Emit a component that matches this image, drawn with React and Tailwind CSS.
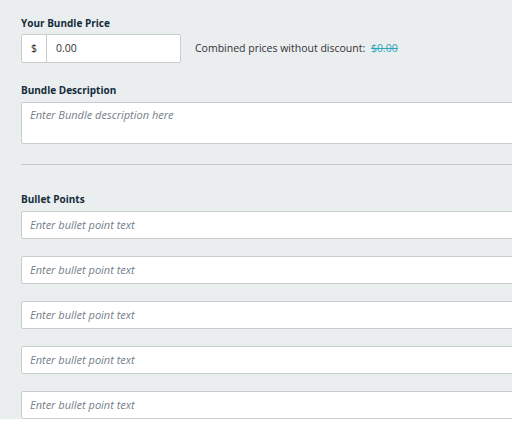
const bullets = [1, 2, 3, 4, 5]

export default function App() {
  return (
    <div className="w-[512px] h-[441px] overflow-hidden bg-white font-['Open_Sans',sans-serif]">
      <div className="h-[419px] overflow-hidden bg-[#eaeeef] pl-[21px] pt-[16px]">
        <div className="w-[580px]">
          {/* Price */}
          <Label>Your Bundle Price</Label>
          <div className="mt-[4px] flex items-center">
            <div className="flex h-[29px] border border-[#c9cdce] rounded-[2px] bg-white">
              <span className="w-[25px] flex items-center justify-center text-[10.5px] text-[#222] border-r border-[#c9cdce]">
                $
              </span>
              <span className="w-[133px] flex items-center pl-[9px] text-[10.5px] text-[#333]">0.00</span>
            </div>
            <p className="ml-[14px] text-[10.5px] text-[#333]">
              Combined prices without discount:{' '}
              <span className="ml-[3px] text-[#2aa8b8] line-through">$0.00</span>
            </p>
          </div>

          {/* Description */}
          <div className="mt-[20px]">
            <Label>Bundle Description</Label>
          </div>
          <div className="mt-[5px] h-[42px] bg-white border border-[#c9cdce] rounded-[2px] pl-[8px] pt-[4px] text-[11px] italic text-[#75808a]">
            Enter Bundle description here
          </div>

          <hr className="mt-[20px] border-0 border-t border-[#c4c8c9]" />

          {/* Bullets */}
          <div className="mt-[27px]">
            <Label>Bullet Points</Label>
          </div>
          <div className="mt-[5px] flex flex-col gap-[17px]">
            {bullets.map((b) => (
              <div
                key={b}
                className="h-[28px] bg-white border border-[#c9cdce] rounded-[2px] flex items-center pl-[8px] text-[11px] italic text-[#75808a]"
              >
                Enter bullet point text
              </div>
            ))}
          </div>
        </div>
      </div>
    </div>
  )
}

function Label({ children }) {
  return <p className="text-[10px] leading-[14px] font-bold text-[#132c3a]">{children}</p>
}
